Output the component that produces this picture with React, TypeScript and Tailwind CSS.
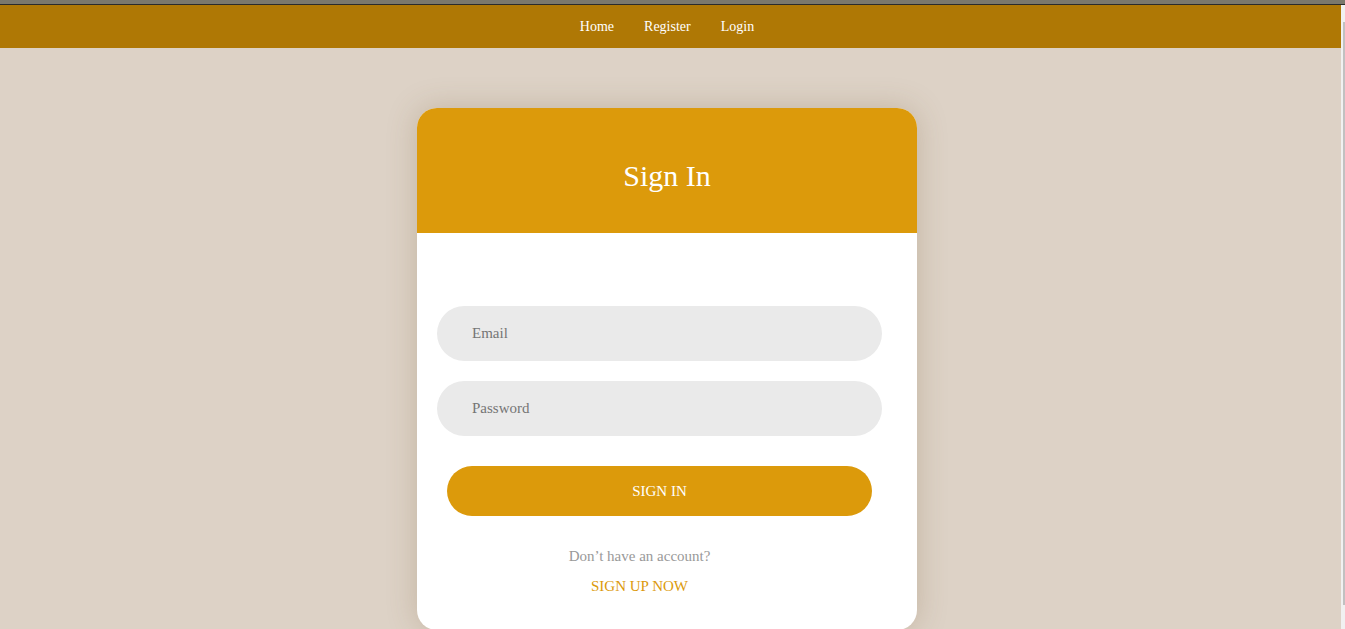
export default function App() {
  return (
    <div className="h-[629px] overflow-hidden flex flex-col bg-[#ddd2c6] font-['Liberation_Serif',serif]">
      <div className="h-[4px] bg-[#7b786c] shrink-0" />
      <div className="h-[1px] bg-[#2b2b2b] shrink-0" />
      <div className="flex flex-1 min-h-0">
        <div className="flex-1 flex flex-col min-w-0">
          <nav className="h-[43px] bg-[#af7805] flex items-center justify-center gap-[30px] text-[14px] text-white pr-[7px] shrink-0">
            <a href="#">Home</a>
            <a href="#">Register</a>
            <a href="#">Login</a>
          </nav>
          <main className="flex justify-center pt-[60px] pr-[7px]">
            <div className="w-[500px] h-[522px] bg-white rounded-[20px] overflow-hidden shadow-[0_0_30px_rgba(120,90,50,0.25)] shrink-0">
              <div className="h-[125px] bg-[#dc9a0b] flex items-center justify-center pt-[10px]">
                <h1 className="text-[30px] text-white leading-none">Sign In</h1>
              </div>
              <form className="pt-[73px] pl-[20px] pr-[35px] flex flex-col">
                <input
                  type="email"
                  placeholder="Email"
                  className="h-[55px] rounded-full bg-[#eaeaea] px-[35px] font-['Liberation_Serif',serif] placeholder:font-['Liberation_Serif',serif] text-[15px] text-[#333] placeholder:text-[#757575] outline-none"
                />
                <input
                  type="password"
                  placeholder="Password"
                  className="mt-[20px] h-[55px] rounded-full bg-[#eaeaea] px-[35px] font-['Liberation_Serif',serif] placeholder:font-['Liberation_Serif',serif] text-[15px] text-[#333] placeholder:text-[#757575] outline-none"
                />
                <button
                  type="button"
                  className="mt-[30px] mx-[10px] h-[50px] rounded-full bg-[#dc9a0b] text-white font-['Liberation_Serif',serif] text-[15px]"
                >
                  SIGN IN
                </button>
                <p className="mt-[29px] text-center text-[15px] text-[#999] pr-[40px]">Don’t have an account?</p>
                <a href="#" className="mt-[7px] text-center text-[15px] text-[#dc9a0b] pr-[40px]">SIGN UP NOW</a>
              </form>
            </div>
          </main>
        </div>
        <div className="w-[4px] bg-[#f1f1f1] shrink-0 pt-[17px] pb-[24px] flex justify-end">
          <div className="w-[2px] h-full bg-[#c1c1c1]" />
        </div>
      </div>
    </div>
  );
}
